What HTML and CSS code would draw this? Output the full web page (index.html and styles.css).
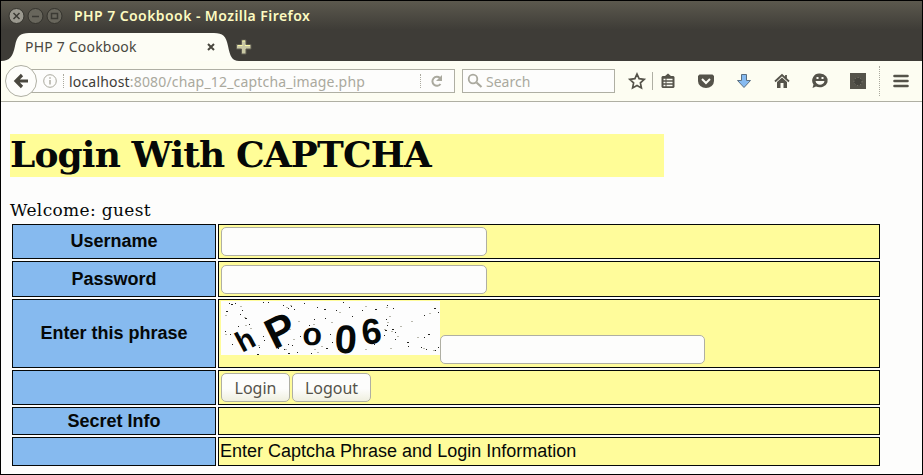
FILE: index.html
```html
<!DOCTYPE html>
<html lang="en">
<head>
<meta charset="utf-8">
<title>PHP 7 Cookbook</title>
<link rel="stylesheet" href="styles.css">
</head>
<body>
<div class="window">
  <header class="chrome">
    <div class="titlebar">
      <svg class="controls" width="56" height="18" viewBox="0 0 56 18">
        <g fill="#68665c" stroke="#34332d"><circle cx="8.500" cy="9" r="7.500" fill="#9b998f"/><circle cx="27.500" cy="9" r="7.500"/><circle cx="46.500" cy="9" r="7.500"/></g>
        <g fill="none" stroke="#3b3a34" stroke-width="1.500"><path d="M5.500 6l6 6M11.500 6l-6 6M24 9.500h7"/><rect x="43.500" y="6.500" width="6" height="5"/></g>
      </svg>
      <span class="window-title">PHP 7 Cookbook - Mozilla Firefox</span>
    </div>
    <div class="tabs">
      <div class="tab">
        <svg class="tab-shape" width="238" height="28" viewBox="0 0 238 28"><path d="M0 28C9 28 12 23 14 13C16 3 19 0 28 0H213C222 0 225 3 227 13C229 23 231 28 238 28Z" fill="#fdfdf5"/></svg>
        <span class="tab-name">PHP 7 Cookbook</span>
        <svg class="tab-close" width="8" height="8" viewBox="0 0 8 8"><path d="M1 1l6 6M7 1L1 7" stroke="#49473f" stroke-width="2"/></svg>
      </div>
      <svg class="new-tab" width="16" height="16" viewBox="0 0 16 16"><path d="M5.500 1h4.500v4.500h5v4.500h-5v5h-4.500v-5h-5v-4.500h5z" fill="#c9c8a4" stroke="#5d5b51"/><path d="M6.500 2h2.500M2 6.500h4.500M9 6.500h5" stroke="#fbf9a5"/></svg>
    </div>
    <div class="toolbar">
      <svg class="back" width="34" height="34" viewBox="0 0 34 34"><circle cx="17" cy="17" r="15.500" fill="#fdfdfb" stroke="#afafa3"/><path d="M24 17H12M18 11L12 17l6 6" fill="none" stroke="#49473f" stroke-width="3.200"/></svg>
      <div class="address">
        <svg width="14" height="14" viewBox="0 0 14 14"><circle cx="7" cy="7" r="6.300" fill="none" stroke="#aaa99e"/><path d="M7 6v4.500M7 3.300v1.500" stroke="#aaa99e" stroke-width="1.400"/></svg>
        <i class="dots"></i>
        <span class="url"><b>localhost</b>:8080/chap_12_captcha_image.php</span>
        <i class="dots reload-line"></i>
        <svg class="reload" width="14" height="14" viewBox="0 0 14 14"><path d="M10.500 10A4.500 4.500 0 1 1 10 4" fill="none" stroke="#aaa99e" stroke-width="2"/><path d="M12 1v6H6z" fill="#aaa99e"/></svg>
      </div>
      <div class="search">
        <svg width="16" height="16" viewBox="0 0 16 16"><circle cx="6" cy="6" r="4.300" fill="none" stroke="#aaa99e" stroke-width="1.800"/><path d="M9.500 9.500l5 4.500" stroke="#aaa99e" stroke-width="2.200"/></svg>
        <span>Search</span>
      </div>
      <div class="tools">
        <svg class="star" width="18" height="18" viewBox="0 0 18 18"><path d="M9 2l2.100 4.700 5.100.6-3.800 3.500 1 5.100L9 13.400l-4.400 2.500 1-5.100-3.800-3.500 5.100-.6z" fill="none" stroke="#55534a" stroke-width="1.700"/></svg>
        <i class="divider"></i>
        <svg class="list" width="16" height="16" viewBox="0 0 16 16"><path d="M5 3l3-2.500L11 3h2.500l1 1v10l-1 1h-11l-1-1V4l1-1z" fill="#55534a"/><path d="M3.500 6.500h2M6.500 6.500h6M3.500 9.500h2M6.500 9.500h6M3.500 12.500h2M6.500 12.500h6" stroke="#fdfdf5" stroke-width="1.500"/></svg>
        <svg class="pocket" width="18" height="16" viewBox="0 0 18 16"><path d="M2.500 1.500h13l1.500 1.500v5a8 7 0 0 1-16 0V3z" fill="#55534a"/><path d="M5 6l4 4 4-4" fill="none" stroke="#fdfdf5" stroke-width="2"/></svg>
        <svg class="download" width="16" height="16" viewBox="0 0 16 16"><path d="M5.500 1.500h5v6h4L8 14.500 1.500 7.500h4z" fill="#86baf0" stroke="#5a6f82"/></svg>
        <svg class="home" width="16" height="16" viewBox="0 0 16 16"><path d="M1 8.500L8 2l7 6.500M12 2v3" fill="none" stroke="#55534a" stroke-width="1.800"/><path d="M3 9l5-4.500L13 9v6H9.500v-5h-3v5H3z" fill="#55534a"/></svg>
        <svg class="smile" width="18" height="16" viewBox="0 0 18 16"><path d="M9 .5a8 6.900 0 1 1-4 13L1.500 15l1-3.500A7 7 0 0 1 9 .5z" fill="#55534a"/><path d="M4.500 8c1 5 8 5 9 0z" fill="#fdfdf5"/><path d="M5.500 5h2M10.500 5h2" stroke="#fdfdf5" stroke-width="1.800"/></svg>
        <svg class="addon" width="16" height="16" viewBox="0 0 16 16"><path fill="#55534a" d="M0 0h16v16H0z"/><circle cx="8" cy="8.500" r="4" fill="#45443d" stroke="#86847a" stroke-dasharray="1 2"/></svg>
        <i class="dots menu-line"></i>
        <svg class="menu" width="16" height="14" viewBox="0 0 16 14"><path d="M1.500 2h13M1.500 7h13M1.500 12h13" stroke="#55534a" stroke-width="2.600" stroke-linecap="round"/></svg>
      </div>
    </div>
  </header>
  <main class="page">
    <h1>Login With CAPTCHA</h1>
    <p class="welcome">Welcome: guest</p>
    <form class="login">
      <label class="head">Username</label>
      <div class="cell"><input class="field" type="text"></div>
      <label class="head">Password</label>
      <div class="cell"><input class="field" type="password"></div>
      <label class="head">Enter this phrase</label>
      <div class="cell phrase">
        <svg class="captcha" width="219" height="54" viewBox="0 0 219 54">
          <path fill="#fdfdfd" d="M0 0h219v54H0z"/>
          <path class="noise" d="M5 10h2M8 2h1M10 3h2M14 2h1M19 13h1M21 9h1M24 17h2M28 23h1M42 1h1M47 1h1M62 4h1M67 7h1M70 5h1M73 8h1M65 16h1M83 2h1M96 6h1M103 8h2M104 17h1M122 1h1M128 6h1M131 15h1M141 9h1M154 8h2M166 4h1M168 15h1M172 7h1M203 14h1M213 7h2M217 11h1M165 18h1M166 24h1M164 29h2M163 34h1M171 28h2M174 31h1M174 38h1M186 41h2M187 45h1M207 33h2M203 36h1M200 46h1M214 49h1M205 48h1M217 46h1M144 48h1M153 43h1M117 48h1M111 41h1M109 33h1M93 18h1M88 24h1M84 32h1M79 35h1M71 44h1M73 38h1M67 43h1M63 48h1M67 52h2M76 51h1M38 46h1M36 53h2M42 35h1M43 39h1M11 43h1M9 33h1M4 30h1M51 31h1M57 47h1M90 52h1M105 47h2M17 25h1M115 9h1"/>
          <path class="noise light" d="M4 14h2M19 5h2M23 16h2M29 27h2M65 6h2M69 4h2M72 38h2M64 48h2M68 28h2M77 20h2M92 23h2M93 48h2M100 45h2M96 51h2M110 21h2M118 11h2M144 5h2M165 6h2M168 15h2M166 21h2M163 28h2M170 30h2M176 35h2M179 25h2M190 20h2M196 36h2M202 47h2M208 12h2M212 49h2M169 47h2M144 48h2M4 33h2M18 35h2M24 24h2M37 44h2"/>
          <g class="letters"><text transform="translate(21 52) rotate(-28)" font-size="29">h</text><text transform="translate(53 49) rotate(-26)" font-size="43">P</text><text transform="translate(81 43.500) rotate(3)" font-size="32">o</text><text transform="translate(113 51.500) rotate(3)" font-size="40">0</text><text transform="translate(142 44) rotate(-7)" font-size="36">6</text></g>
        </svg>
        <input class="field answer" type="text">
      </div>
      <span class="head"></span>
      <div class="cell"><button type="button" class="login-button">Login</button><button type="button" class="logout-button">Logout</button></div>
      <span class="head">Secret Info</span>
      <div class="cell"></div>
      <span class="head"></span>
      <div class="cell message">Enter Captcha Phrase and Login Information</div>
    </form>
  </main>
</div>
</body>
</html>
```
FILE: styles.css
```css
* { box-sizing: border-box; }
body { margin: 0; background: #fdfdfd; color: #050808; }
svg { display: block; flex: none; overflow: visible; }
.window { width: 923px; height: 475px; border: 1px solid #000; overflow: hidden; background: #fdfdfc; }
.chrome { height: 101px; font: 14px "Noto Sans", sans-serif; border-bottom: 1px solid #afafa3; }
.titlebar { height: 32px; padding: 0 0 3px 7px; display: flex; align-items: center; background: linear-gradient(#5c594e, #3e3c37 90%); }
.controls { margin-right: 10px; }
.window-title { color: #fdfbc1; font-weight: 600; font-size: 14px; letter-spacing: 0.43px; white-space: nowrap; }
.tabs { height: 28px; background: #3e3c37; display: flex; align-items: center; }
.tab { width: 236px; height: 28px; padding: 0 22px 0 24px; display: flex; align-items: center; justify-content: space-between; position: relative; }
.tab-shape { position: absolute; left: 0; top: 0; }
.tab-name, .tab-close { position: relative; }
.tab-name { color: #49473f; letter-spacing: 0.2px; margin-top: -1px; }
.new-tab { margin: 0 0 1px -1px; }
.toolbar { height: 40px; display: flex; align-items: center; background: #fdfdf2; padding-left: 3px; }
.back { position: relative; z-index: 1; }
.address { width: 425px; height: 24px; margin-left: -8px; padding-left: 12px; border: 1px solid #afafa3; background: #fdfdfc; display: flex; align-items: center; }
.dots { height: 14px; border-left: 1px dotted #aaa99e; margin-left: 6px; flex: none; }
.url { margin-left: 5px; width: 301px; color: #aaa99e; white-space: nowrap; letter-spacing: 0.18px; }
.url b { font-weight: 400; color: #3e3c37; }
.reload-line { margin-left: 50px; }
.reload { margin-left: 9px; }
.search { width: 153px; height: 24px; margin-left: 7px; padding-left: 4px; border: 1px solid #afafa3; background: #fdfdfc; display: flex; align-items: center; gap: 3px; color: #aaa99e; }
.tools { flex: 1; display: flex; align-items: center; }
.star { margin-left: 13px; }
.divider { height: 18px; border-left: 1px solid #afafa3; margin-left: 6px; }
.list { margin-left: 7px; }
.pocket { margin-left: 21px; }
.download { margin-left: 21px; }
.home { margin-left: 22px; }
.smile { margin-left: 21px; }
.addon { margin-left: 21px; }
.menu-line { height: 30px; margin-left: 13px; }
.menu { margin-left: 13px; }

.page { padding: 32px 0 0 9px; }
h1 { width: 654px; height: 43px; margin: 0; background: #fffd97; font: bold 36px/41px "DejaVu Serif", serif; letter-spacing: -0.88px; white-space: nowrap; }
.welcome { height: 21px; margin: 23px 0 3px; font: 17px/21px "DejaVu Serif", serif; letter-spacing: 0.35px; }
.login { margin-left: 2px; display: grid; grid-template-columns: 204px 662px; grid-template-rows: 35px 36px 69px 35px 28px 29px; gap: 2px; font: 18px "Liberation Sans", sans-serif; }
.head, .cell { border: 1px solid #050808; display: flex; align-items: center; }
.head { background: #86baef; justify-content: center; font-weight: bold; }
.cell { background: #fffc9b; padding-left: 2px; }
.field { width: 266px; height: 29px; border: 1px solid #afafa3; border-radius: 5px; background: #fdfdfc; padding: 0 6px; margin: 0; outline: 0; }
.phrase { align-items: flex-start; padding: 1px 0 0 2px; }
.answer { width: 265px; margin: 34px 0 0; }
.noise { stroke: #22221f; stroke-width: 1; transform: translateY(0.5px); }
.light { stroke: #b9b8ae; }
.letters { font-family: "Liberation Sans", sans-serif; font-weight: bold; fill: #050808; }
button { height: 29px; padding: 0; border: 1px solid #afafa3; border-radius: 5px; background: linear-gradient(#fdfdfc 55%, #efefdf); color: #55534a; font: 16px "Noto Sans", sans-serif; }
.login-button { width: 69px; margin-right: 2px; }
.logout-button { width: 79px; }
.message { padding-left: 1px; }
```
